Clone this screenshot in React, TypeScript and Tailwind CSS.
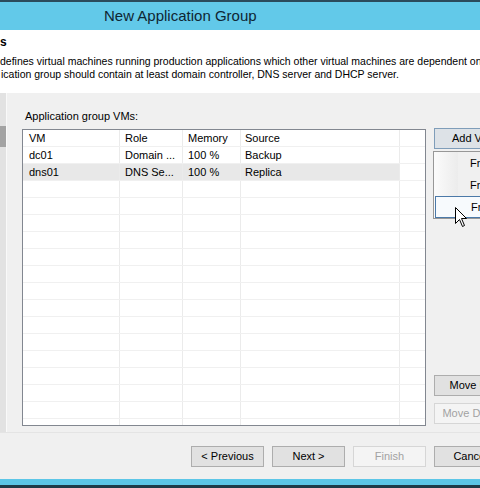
import React from 'react';

type VmRow = { vm: string; role: string; mem: string; src: string; selected?: boolean };

const rows: VmRow[] = [
  { vm: 'dc01', role: 'Domain ...', mem: '100 %', src: 'Backup' },
  { vm: 'dns01', role: 'DNS Se...', mem: '100 %', src: 'Replica', selected: true },
];

const emptyRows = Array.from({ length: 15 });

const TableRow: React.FC<{ cells: string[]; selected?: boolean }> = ({ cells, selected }) => {
  const sel = selected ? 'bg-[#e8e8e8]' : '';
  return (
    <div className="flex h-[17px] shrink-0 border-b border-[#f0f0f0] leading-[16px]">
      <div className={`w-[97px] shrink-0 border-r border-[#ebebeb] pl-[6px] overflow-hidden whitespace-nowrap ${sel}`}>{cells[0]}</div>
      <div className={`w-[63px] shrink-0 border-r border-[#ebebeb] pl-[5px] overflow-hidden whitespace-nowrap ${sel}`}>{cells[1]}</div>
      <div className={`w-[58px] shrink-0 border-r border-[#ebebeb] pl-[5px] overflow-hidden whitespace-nowrap ${sel}`}>{cells[2]}</div>
      <div className={`w-[159px] shrink-0 border-r border-[#ebebeb] pl-[4px] overflow-hidden whitespace-nowrap ${sel}`}>{cells[3]}</div>
      <div className="flex-1" />
    </div>
  );
};

const WinButton: React.FC<{ label: string; disabled?: boolean; className?: string }> = ({ label, disabled, className = '' }) => (
  <div
    className={`h-[21px] flex items-center justify-center whitespace-nowrap border ${
      disabled ? 'bg-[#f4f4f4] border-[#d6d6d6] text-[#a2a2a2]' : 'bg-[#e1e1e1] border-[#adadad] text-black'
    } ${className}`}
  >
    {label}
  </div>
);

const Cursor: React.FC = () => (
  <svg className="absolute left-[21px] top-[55px]" width="13" height="21" viewBox="0 0 13 21">
    <path d="M0.5 0.5 L0.5 16.5 L4.5 12.5 L7.5 19.5 L9.5 18.5 L6.5 11.5 L11.5 11.5 Z" fill="#fff" stroke="#000" strokeWidth="1" />
  </svg>
);

export default function App() {
  return (
    <div className="w-[480px] h-[488px] overflow-hidden flex flex-col bg-[#f0f0f0] text-[11px] text-black font-['Liberation_Sans',Arial,sans-serif]">
      {/* window top edge + title */}
      <div className="h-[2px] shrink-0 bg-[#2b4b5c]" />
      <div className="h-[28px] shrink-0 bg-[#62c9e9] flex items-center pl-[104px] text-[15px] text-[#0f2633] whitespace-nowrap">
        New Application Group
      </div>

      {/* header */}
      <div className="h-[63px] shrink-0 bg-white pt-[5px] whitespace-nowrap overflow-hidden">
        <div className="text-[12px] font-bold leading-[14px]">s</div>
        <div className="mt-[6px] leading-[13px] text-[10.5px]">
          <div>defines virtual machines running production applications which other virtual machines are dependent on</div>
          <div className="pl-px">ication group should contain at least domain controller, DNS server and DHCP server.</div>
        </div>
      </div>

      {/* body */}
      <div className="h-[339px] shrink-0 flex">
        <div className="w-[6px] shrink-0 bg-[#e2e2e2] border-r border-[#f9f9f9] box-content pt-[33px]">
          <div className="h-[21px] bg-[#a3a3a3]" />
        </div>
        <div className="flex-1 flex pl-[15px] pt-[16px]">
          <div className="w-[404px] shrink-0 flex flex-col">
            <div className="pl-[3px] leading-[14px] h-[14px]">Application group VMs:</div>
            <div className="mt-[6px] h-[297px] border border-[#828790] bg-white flex flex-col overflow-hidden">
              <TableRow cells={['VM', 'Role', 'Memory', 'Source']} />
              {rows.map((r) => (
                <TableRow key={r.vm} cells={[r.vm, r.role, r.mem, r.src]} selected={r.selected} />
              ))}
              {emptyRows.map((_, i) => (
                <TableRow key={i} cells={['', '', '', '']} />
              ))}
            </div>
          </div>

          <div className="ml-[8px] w-[75px] shrink-0 flex flex-col pt-[19px] pb-[8px]">
            <div className="relative">
              <div className="h-[21px] flex items-center justify-center whitespace-nowrap border border-[#7f9db9] bg-[#dde2e7]">
                Add VM
              </div>
              {/* dropdown menu */}
              <div className="absolute left-[-1px] top-[23px] w-[140px] h-[68px] border border-[#979797] bg-[#f0f0f0] flex">
                <div className="w-[24px] shrink-0 bg-gradient-to-r from-[#fbfbfb] to-[#ececec]" />
                <div className="flex-1" />
                <div className="absolute left-0 right-0 top-0 flex flex-col">
                  <div className="h-[22px] flex items-center pl-[36px] whitespace-nowrap">From infrastructure...</div>
                  <div className="h-[22px] flex items-center pl-[36px] whitespace-nowrap">From backups...</div>
                  <div className="h-[22px] flex items-center pl-[35px] ml-px whitespace-nowrap border border-[#4b79a8] bg-[#f7fafd]">From replicas...</div>
                </div>
                <Cursor />
              </div>
            </div>
            <div className="flex-1" />
            <WinButton label="Move Up" />
            <WinButton label="Move Down" disabled className="mt-[7px]" />
          </div>
        </div>
      </div>

      {/* footer */}
      <div className="h-[47px] shrink-0 border-t border-[#e4e4e4] flex gap-[8px] pl-[191px] pt-[13px]">
        <WinButton label="< Previous" className="w-[73px] shrink-0" />
        <WinButton label="Next >" className="w-[73px] shrink-0" />
        <WinButton label="Finish" disabled className="w-[73px] shrink-0" />
        <WinButton label="Cancel" className="w-[73px] shrink-0" />
      </div>

      <div className="h-[6px] shrink-0 bg-[#5cc6e7]" />
      <div className="h-[3px] shrink-0 bg-[#1e3b49]" />
    </div>
  );
}
